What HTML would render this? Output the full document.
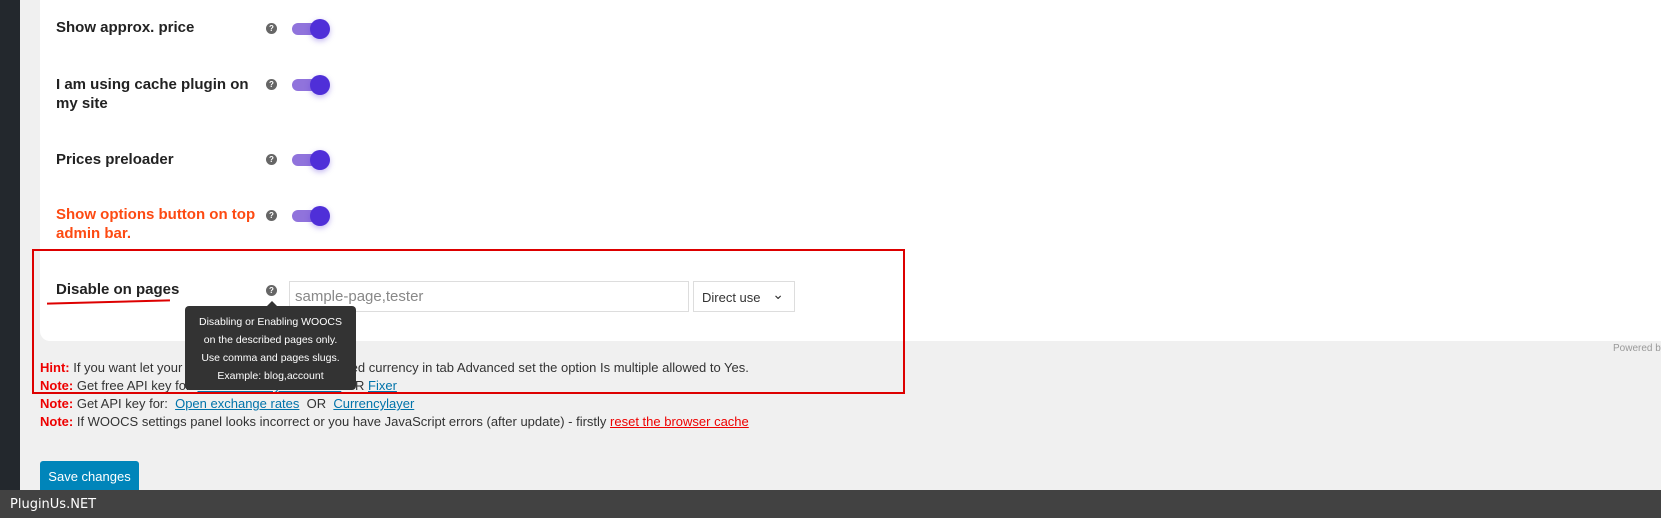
<!DOCTYPE html>
<html><head><meta charset="utf-8"><style>
*{margin:0;padding:0;box-sizing:border-box}
body{width:1661px;height:518px;overflow:hidden;background:#f0f0f0;font-family:"Liberation Sans",sans-serif;position:relative}
.side{position:absolute;left:0;top:0;width:20px;height:518px;background:#23282d}
.panel{position:absolute;left:40px;top:0;width:1621px;height:341px;background:#fff;border-radius:0 0 0 10px}
.lbl{position:absolute;left:56px;font-size:15px;font-weight:bold;color:#222;line-height:19px;letter-spacing:0}
.q{position:absolute;width:11px;height:11px;border-radius:50%;background:#666;color:#fff;font-size:8px;font-weight:bold;text-align:center;line-height:11px}
.tg{position:absolute;left:292px;width:37px;height:12px;border-radius:6px;background:#9073dc}
.tg:after{content:"";position:absolute;right:-1px;top:-4px;width:20px;height:20px;border-radius:50%;background:#4f2fd8;box-shadow:0 2px 6px rgba(79,47,216,.35)}
.box{position:absolute;left:32px;top:249px;width:873px;height:145px;border:2px solid #d00}
.inp{position:absolute;left:289px;top:281px;width:400px;height:31px;border:1px solid #ddd;font-size:15px;color:#888;padding:6px 5px}
.sel{position:absolute;left:693px;top:281px;width:102px;height:31px;border:1px solid #ddd;font-size:13px;color:#333;padding:8px 8px}
.tip{position:absolute;left:185px;top:306px;width:171px;height:84px;background:#333;border-radius:4px;color:#fff;font-size:10.5px;text-align:center;line-height:18px;padding-top:7px}
.tip:before{content:"";position:absolute;left:82px;top:-5px;border:5px solid transparent;border-top:0;border-bottom-color:#333}
.n{position:absolute;left:40px;font-size:13px;color:#333;line-height:16px;white-space:nowrap}
.n b{color:#e00;font-weight:bold}
.n a{color:#0073aa;text-decoration:underline}
.btn{position:absolute;left:40px;top:461px;width:99px;height:32px;background:#0085ba;border-radius:3px;color:#fff;font-size:13px;padding:8px 0;text-align:center;white-space:nowrap}
.foot{position:absolute;left:0;top:490px;width:1661px;height:28px;background:#424242;color:#fff;font-family:"DejaVu Sans",sans-serif;font-size:13px;padding:7px 10px}
</style></head><body>
<div class="side"></div>
<div class="panel"></div>
<div class="lbl" style="top:18px">Show approx. price</div>
<div class="q" style="left:266px;top:23px">?</div><div class="tg" style="top:23px"></div>
<div class="lbl" style="top:75px">I am using cache plugin on<br>my site</div>
<div class="q" style="left:266px;top:79px">?</div><div class="tg" style="top:79px"></div>
<div class="lbl" style="top:150px">Prices preloader</div>
<div class="q" style="left:266px;top:154px">?</div><div class="tg" style="top:154px"></div>
<div class="lbl" style="top:205px;color:#fd4a12">Show options button on top<br>admin bar.</div>
<div class="q" style="left:266px;top:210px">?</div><div class="tg" style="top:210px"></div>
<div class="lbl" style="top:280px">Disable on pages</div>
<div style="position:absolute;left:47px;top:301px;width:123px;height:2px;background:#d00;transform:rotate(-1.5deg)"></div>
<div class="q" style="left:266px;top:285px">?</div>
<div class="inp">sample-page,tester</div>
<div class="sel">Direct use<span style="position:absolute;right:10px;top:4px;font-size:14px">&#8964;</span></div>
<div style="position:absolute;left:1613px;top:343px;font-size:10px;color:#999;white-space:nowrap">Powered by</div>
<div class="n" style="top:360px"><b>Hint:</b> If you want let your customers pay in their selected currency in tab Advanced set the option Is multiple allowed to Yes.</div>
<div class="n" style="top:378px"><b>Note:</b> Get free API key for: <a>Free Currency Converter</a> OR <a>Fixer</a></div>
<div class="n" style="top:396px"><b>Note:</b> Get API key for:&nbsp; <a>Open exchange rates</a>&nbsp; OR&nbsp; <a>Currencylayer</a></div>
<div class="n" style="top:414px"><b>Note:</b> If WOOCS settings panel looks incorrect or you have JavaScript errors (after update) - firstly <a style="color:#e00">reset the browser cache</a></div>
<div class="tip">Disabling or Enabling WOOCS<br>on the described pages only.<br>Use comma and pages slugs.<br>Example: blog,account</div>
<div class="box"></div>
<div class="btn">Save changes</div>
<div class="foot">PluginUs.NET</div>
</body></html>
